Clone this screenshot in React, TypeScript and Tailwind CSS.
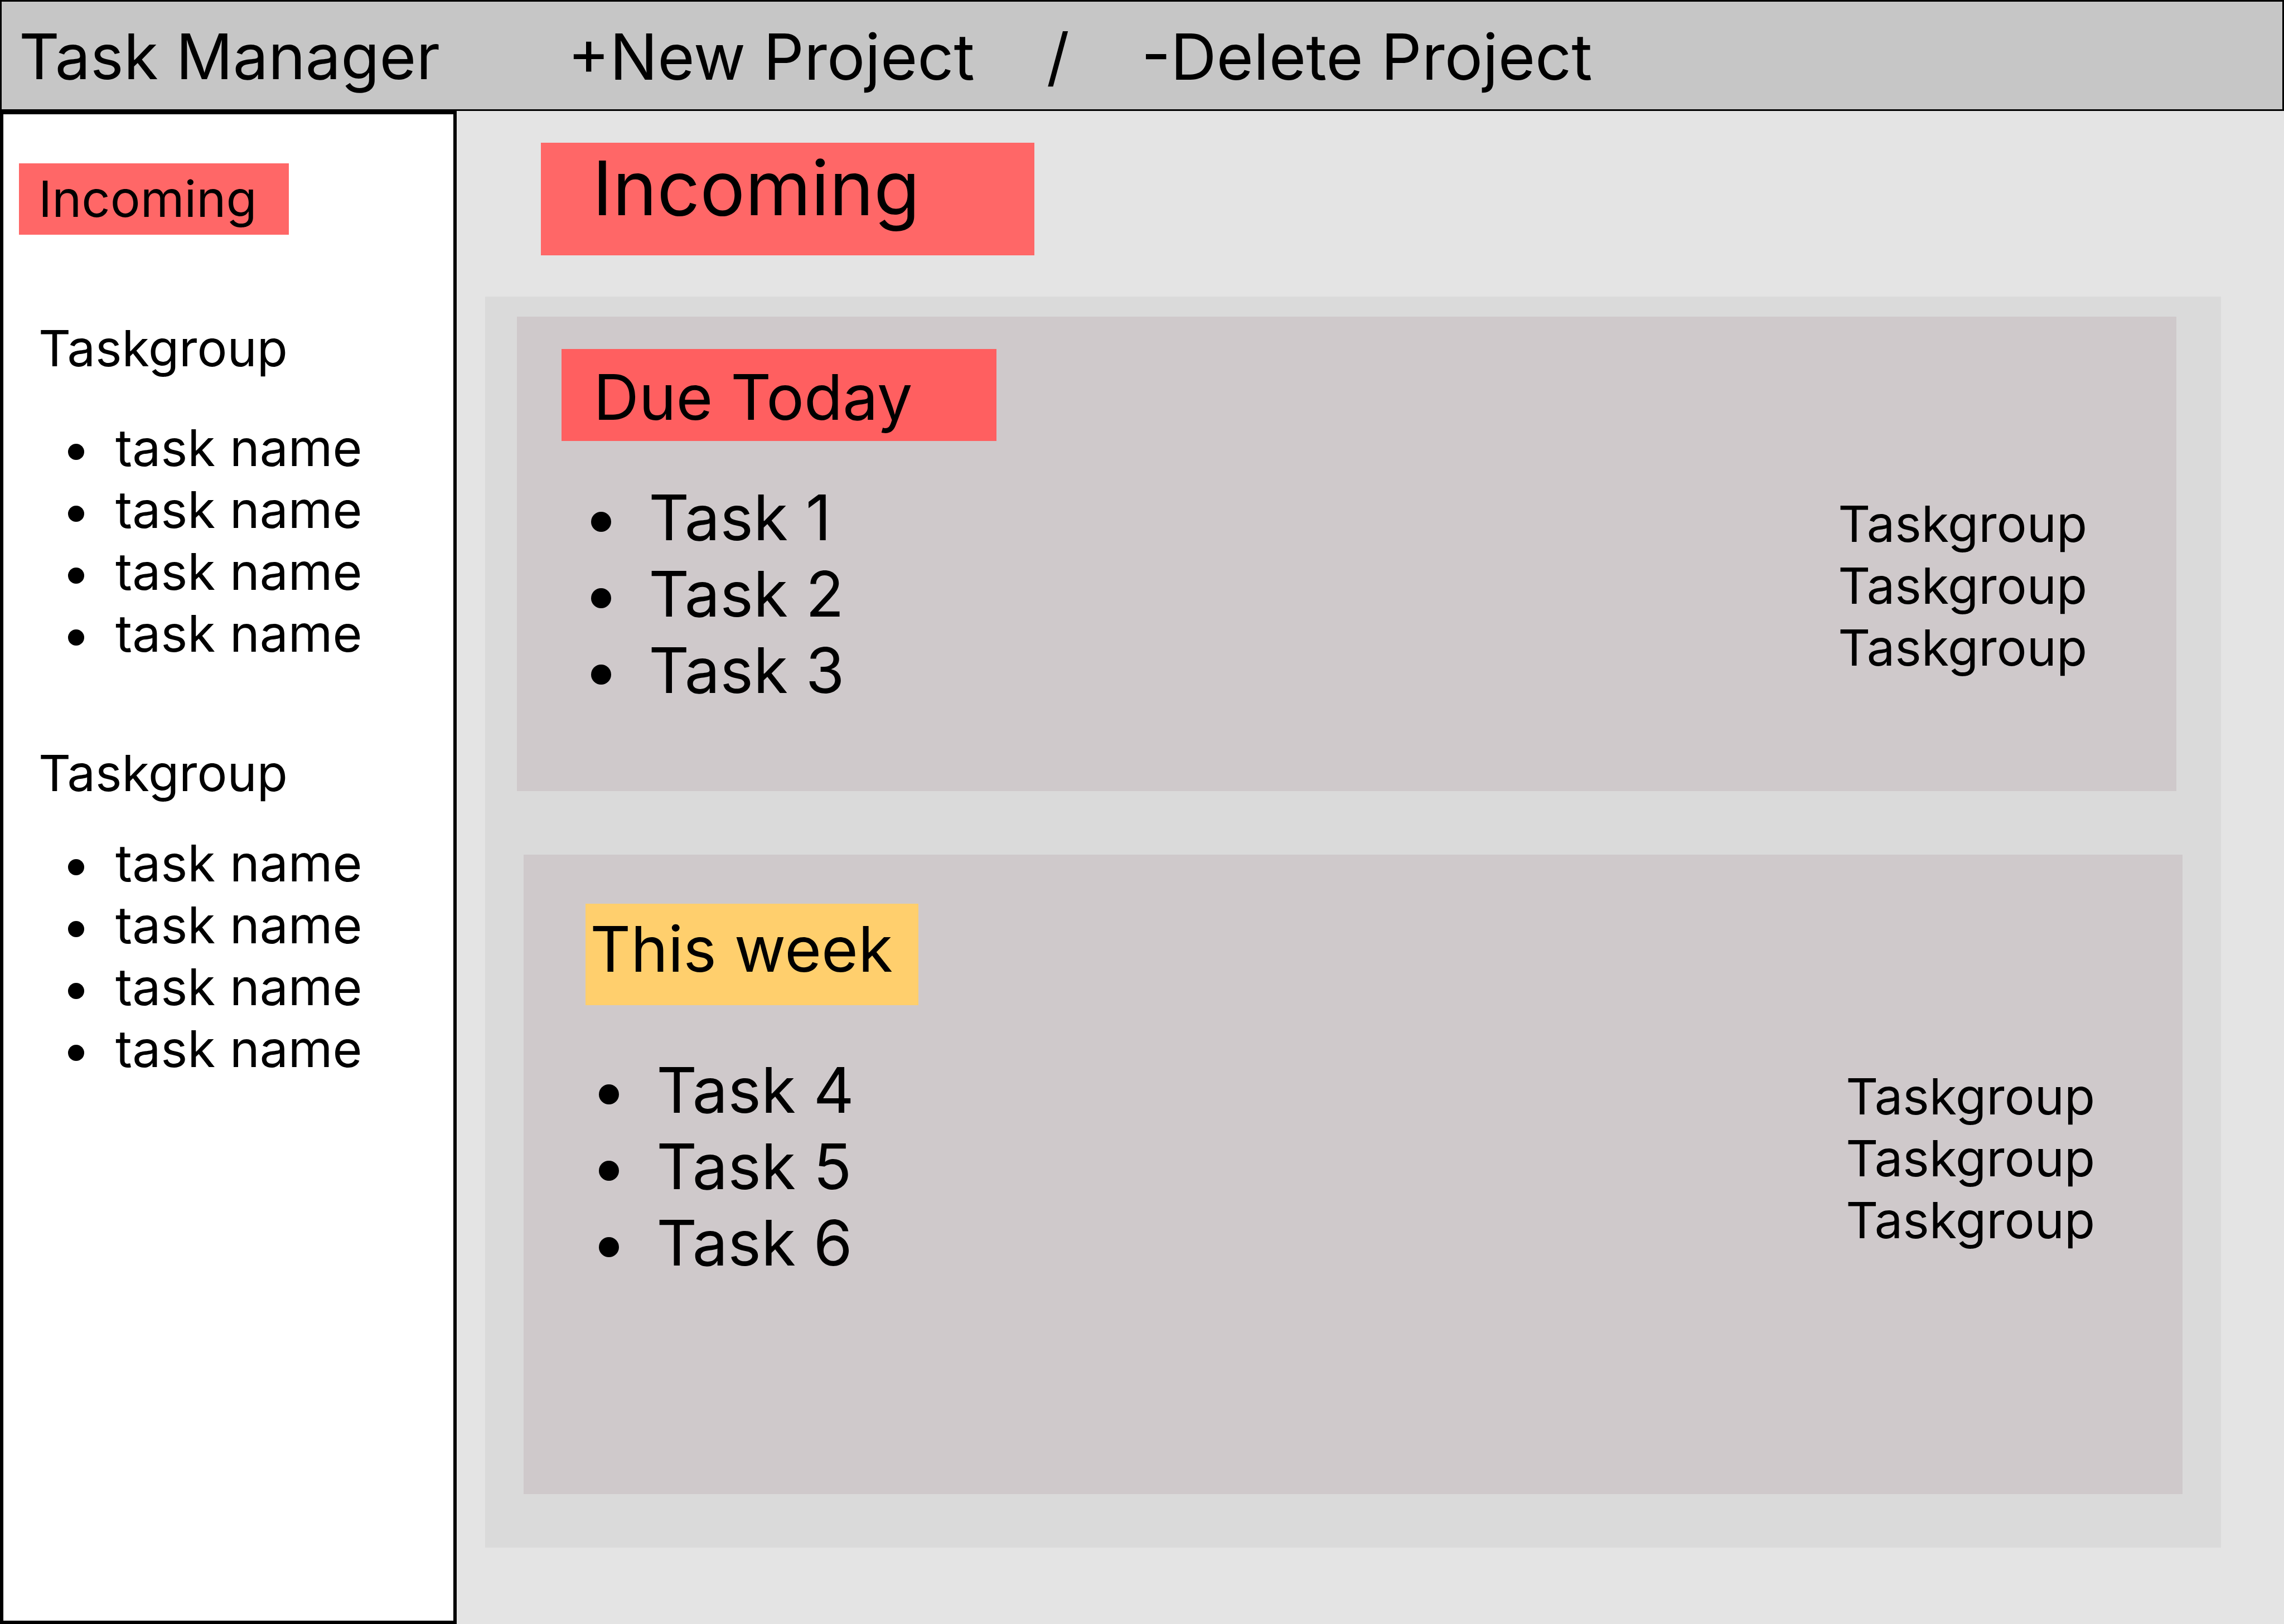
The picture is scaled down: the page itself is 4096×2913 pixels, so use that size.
type Group = { name: string; tasks: string[] };

const sidebarTasks = ["task name", "task name", "task name", "task name"];
const firstGroup: Group = { name: "Taskgroup", tasks: sidebarTasks };
const secondGroup: Group = { name: "Taskgroup", tasks: sidebarTasks };

const dueToday = [
  { title: "Task 1", group: "Taskgroup" },
  { title: "Task 2", group: "Taskgroup" },
  { title: "Task 3", group: "Taskgroup" },
];

const thisWeek = [
  { title: "Task 4", group: "Taskgroup" },
  { title: "Task 5", group: "Taskgroup" },
  { title: "Task 6", group: "Taskgroup" },
];

function SidebarList({ tasks }: { tasks: string[] }) {
  return (
    <ul className="pl-[53px] text-[91px]">
      {tasks.map((task, i) => (
        <li key={i} className="flex items-start gap-14">
          <span className="mt-12 size-[29px] shrink-0 rounded-full bg-black" />
          {task}
        </li>
      ))}
    </ul>
  );
}

function TaskRows({ tasks }: { tasks: { title: string; group: string }[] }) {
  return (
    <div className="flex items-start justify-between">
      <ul className="text-[113px] leading-[137px]">
        {tasks.map((task) => (
          <li key={task.title} className="flex items-start gap-[67px]">
            <span className="mt-[58px] size-9 shrink-0 rounded-full bg-black" />
            {task.title}
          </li>
        ))}
      </ul>
      <ul className="mt-6">
        {tasks.map((task) => (
          <li key={task.title}>{task.group}</li>
        ))}
      </ul>
    </div>
  );
}

export default function App() {
  return (
    <div className="flex min-h-screen flex-col bg-[#e4e4e4] font-['Inter',sans-serif] text-[90px] leading-[111px] text-black">
      <header className="flex items-center gap-[229px] border-[3px] border-black bg-[#c6c6c6] pt-[30px] pb-[26px] pl-[31px] text-[113px] leading-[137px]">
        <h1>Task Manager</h1>
        <nav className="flex items-center gap-[129px] text-[114px]">
          <button type="button">+New Project</button>
          <span>/</span>
          <button type="button">-Delete Project</button>
        </nav>
      </header>

      <div className="flex flex-1">
        <aside className="w-1/5 shrink-0 border-[6px] border-black bg-white pt-[88px]">
          <a
            href="#incoming"
            className="ml-7 block w-[484px] bg-[#ff6767] pt-2 pb-[9px] pl-[35px]"
          >
            Incoming
          </a>
          <section className="mt-[148px] pl-[63px]">
            <h2 className="mb-[68px]">{firstGroup.name}</h2>
            <SidebarList tasks={firstGroup.tasks} />
          </section>
          <section className="mt-[139px] pl-[63px]">
            <h2 className="mb-[51px]">{secondGroup.name}</h2>
            <SidebarList tasks={secondGroup.tasks} />
          </section>
        </aside>

        <main id="incoming" className="flex flex-1 flex-col pt-[57px] pr-[113px] pb-[137px] pl-[51px]">
          <h2 className="ml-[100px] w-[885px] bg-[#ff6767] pb-10 pl-[92px] text-[135px] leading-[162px]">
            Incoming
          </h2>

          <div className="mt-[74px] flex flex-1 flex-col gap-[114px] bg-[#dadada] pt-9 pb-24">
            <section className="mr-20 ml-[57px] bg-[#cfc9cb] pt-[58px] pb-[148px]">
              <h3 className="mb-[69px] ml-20 w-[780px] bg-[#ff5f60] pt-[18px] pb-2.5 pl-[57px] text-[113px] leading-[137px]">
                Due Today
              </h3>
              <div className="pr-40 pl-[133px]">
                <TaskRows tasks={dueToday} />
              </div>
            </section>

            <section className="mr-[69px] ml-[69px] flex-1 bg-[#cfc9cb] pt-[88px]">
              <h3 className="mb-[84px] ml-[111px] w-[597px] bg-[#ffcf6d] pt-[13px] pb-8 pl-2 text-[113px] leading-[137px]">
                This week
              </h3>
              <div className="pr-[157px] pl-[135px]">
                <TaskRows tasks={thisWeek} />
              </div>
            </section>
          </div>
        </main>
      </div>
    </div>
  );
}
